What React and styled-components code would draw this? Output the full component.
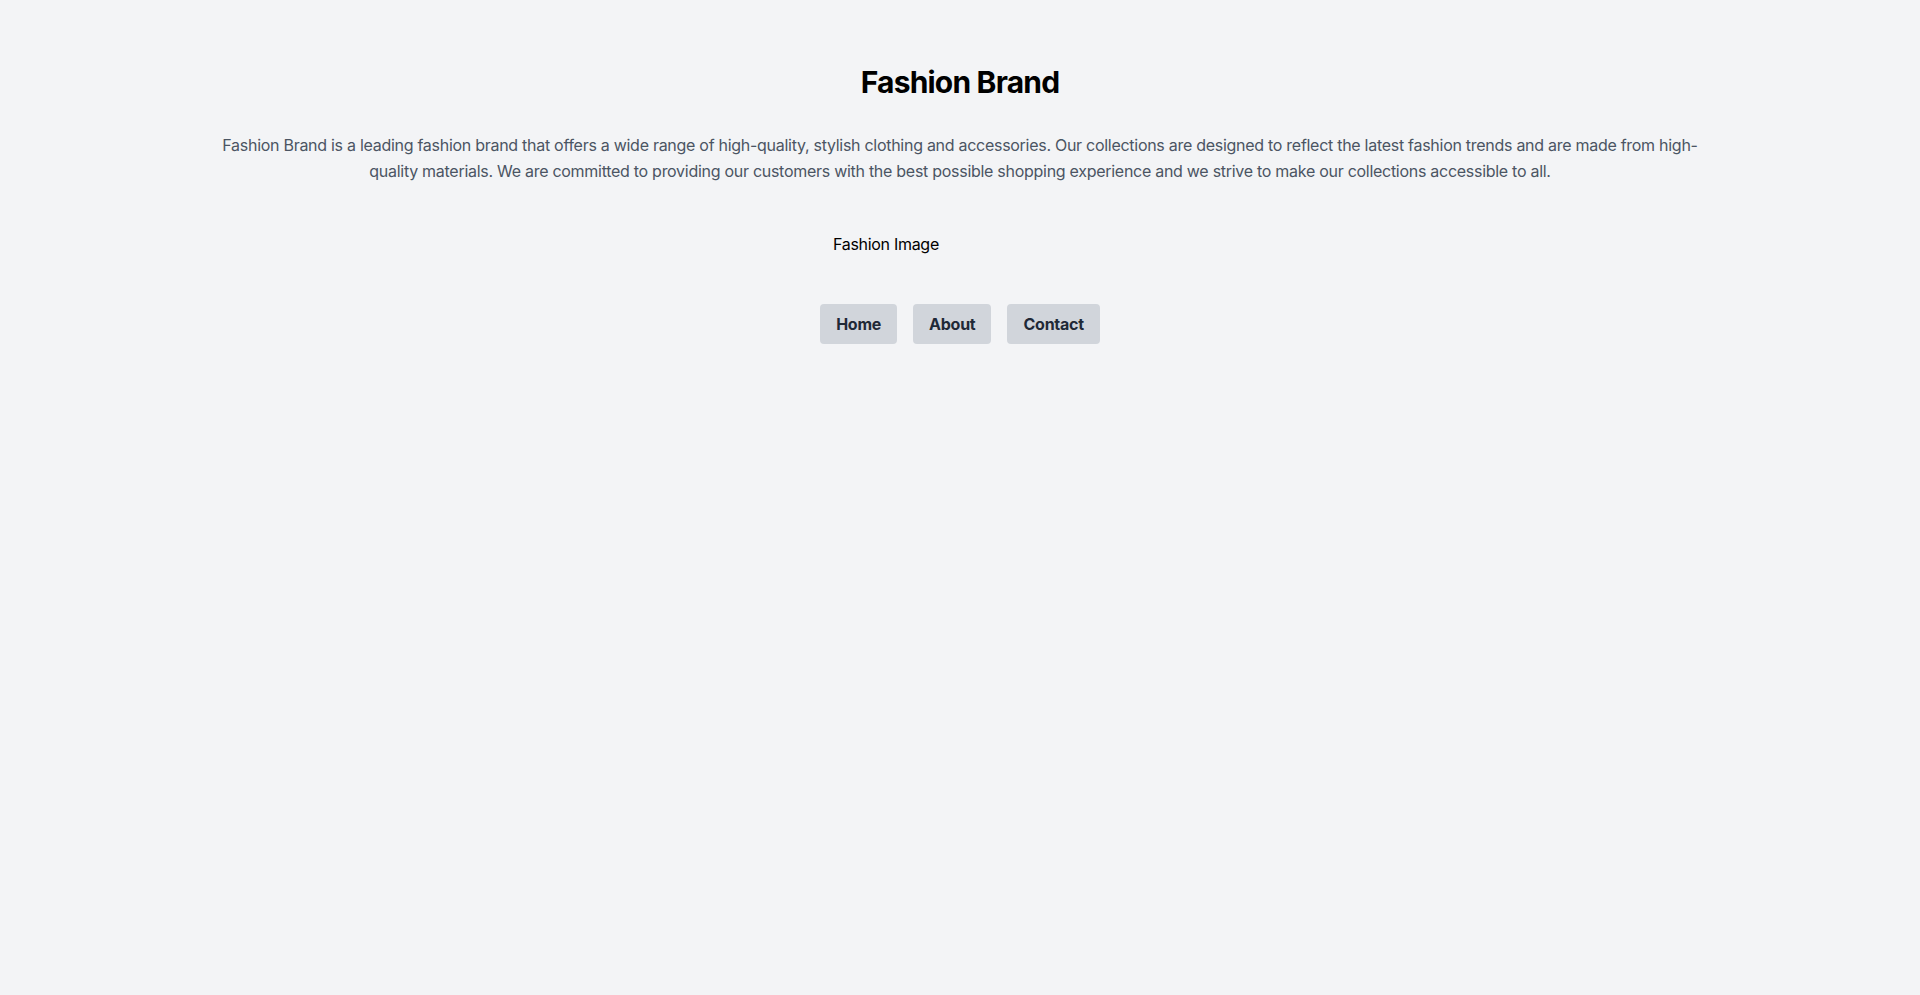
import styled, { createGlobalStyle } from "styled-components";

const GlobalStyle = createGlobalStyle`
  * {
    box-sizing: border-box;
  }
  html, body {
    margin: 0;
    padding: 0;
    background: #f3f4f6;
    min-height: 100vh;
    font-family: Inter, "Noto Sans", sans-serif;
  }
`;

const links = ["Home", "About", "Contact"];

const App = () => {
  return (
    <>
      <GlobalStyle />
      <Page>
        <Container>
          <Title>Fashion Brand</Title>
          <Intro>
            Fashion Brand is a leading fashion brand that offers a wide range of
            high-quality, stylish clothing and accessories. Our collections are
            designed to reflect the latest fashion trends and are made from
            high-quality materials. We are committed to providing our customers
            with the best possible shopping experience and we strive to make our
            collections accessible to all.
          </Intro>
          <ImageBox role="img" aria-label="Fashion Image">
            Fashion Image
          </ImageBox>
          <Nav>
            {links.map((label) => (
              <NavButton key={label}>{label}</NavButton>
            ))}
          </Nav>
        </Container>
      </Page>
    </>
  );
};

export default App;

const Page = styled.div`
  min-height: 100vh;
  background: #f3f4f6;
  padding-top: 64px;
`;

const Container = styled.div`
  max-width: 1536px;
  margin: 0 auto;
  padding: 0 16px;
  display: flex;
  flex-direction: column;
  align-items: center;
`;

const Title = styled.h1`
  margin: 0 0 32px;
  font-size: 30px;
  line-height: 36px;
  font-weight: 700;
  letter-spacing: -0.8px;
  color: #000;
  text-align: center;
`;

const Intro = styled.p`
  margin: 0 0 48px;
  font-size: 16px;
  line-height: 26px;
  letter-spacing: -0.28px;
  color: #4b5563;
  text-align: center;
`;

const ImageBox = styled.div`
  width: 256px;
  height: 24px;
  margin-bottom: 48px;
  font-size: 16px;
  line-height: 24px;
  letter-spacing: -0.3px;
  color: #000;
  text-align: left;
  padding-left: 1px;
`;

const Nav = styled.nav`
  display: flex;
  justify-content: center;
  gap: 16px;
`;

const NavButton = styled.button`
  height: 40px;
  padding: 0 16px;
  border: none;
  border-radius: 4px;
  background: #d1d5db;
  color: #1f2937;
  font-family: Inter, "Noto Sans", sans-serif;
  font-size: 16px;
  font-weight: 700;
  line-height: 24px;
  letter-spacing: -0.25px;
  cursor: pointer;
`;
